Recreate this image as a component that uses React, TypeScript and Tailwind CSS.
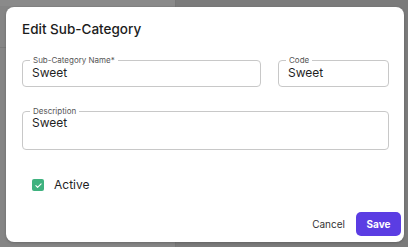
import React from 'react';

const font = { fontFamily: 'Inter, "Noto Sans", sans-serif' };

const Field: React.FC<{ label: string; value: string; className?: string; tall?: boolean }> = ({ label, value, className, tall }) => (
  <div className={`relative border border-[#c8c8c8] rounded-[4px] ${tall ? 'h-[39px]' : 'h-[27px]'} ${className ?? ''}`}>
    <span className="absolute -top-[6px] left-[7px] bg-white px-[3px] text-[8px] leading-[10px] text-[#555]">{label}</span>
    <div className={`pl-[9px] text-[12px] leading-[14px] text-[#1f1f1f] ${tall ? 'pt-[4px]' : 'pt-[5px]'}`}>{value}</div>
  </div>
);

export default function App() {
  return (
    <div className="relative w-[408px] h-[247px] overflow-hidden" style={font}>
      {/* dimmed page behind the dialog */}
      <div className="flex h-full">
        <div className="w-[176px] bg-[#858585] border-r border-[#777]">
          <div className="h-[6px] bg-[#8a8a8a]" />
          <div className="h-[41px]" />
          <div className="border-t border-[#7a7a7a]" />
        </div>
        <div className="flex-1 bg-[#7b7b7b]" />
      </div>

      <div className="absolute left-[6px] top-[7px] w-[398px] h-[235px] bg-white rounded-[8px] flex flex-col shadow-[0_1px_3px_rgba(0,0,0,0.2)]">
        <h2 className="pl-[16px] pt-[13px] text-[13.5px] leading-[18px] text-[#1c1c1c] font-medium">Edit Sub-Category</h2>
        <div className="pl-[16px] pr-[15px] mt-[22px] flex gap-[17px]">
          <Field label="Sub-Category Name*" value="Sweet" className="w-[239px]" />
          <Field label="Code" value="Sweet" className="flex-1" />
        </div>
        <div className="pl-[16px] pr-[15px] mt-[24px]">
          <Field label="Description" value="Sweet" tall />
        </div>
        <div className="pl-[26px] mt-[28px] flex items-center gap-[10px]">
          <span className="w-[12px] h-[12px] rounded-[2px] bg-[#3fb27f] flex items-center justify-center">
            <svg width="9" height="9" viewBox="0 0 24 24" fill="none" stroke="white" strokeWidth="3" strokeLinecap="round" strokeLinejoin="round">
              <path d="M5 12.5l4.5 4.5L19 7.5" />
            </svg>
          </span>
          <span className="text-[12px] leading-[14px] text-[#1f1f1f]">Active</span>
        </div>
        <div className="mt-auto pb-[6px] pr-[3px] flex items-center justify-end gap-[11px]">
          <span className="text-[10px] text-[#333]">Cancel</span>
          <button className="w-[45px] h-[24px] rounded-[5px] bg-[#5b3de3] text-white text-[10px] font-bold">Save</button>
        </div>
      </div>
    </div>
  );
}
